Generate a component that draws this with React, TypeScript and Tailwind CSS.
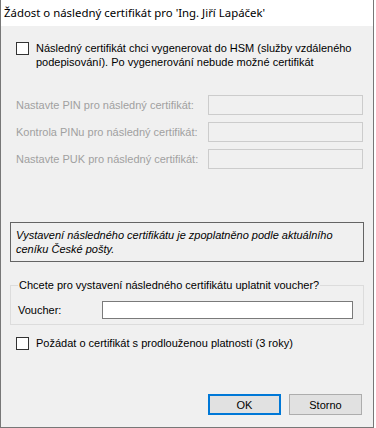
import React from "react";

const body = "font-['Liberation_Sans',Arial,sans-serif] text-[11px] leading-[14px]";

function CheckBox() {
  return <span className="mt-[1px] h-[13px] w-[13px] shrink-0 border border-[#333333] bg-white" />;
}

function PinRow({ label }: { label: string }) {
  return (
    <div className="flex items-center">
      <span className="ml-[6px] w-[192px] text-[#a0a0a0]">{label}</span>
      <span className="h-[20px] w-[155px] border border-[#cccccc] bg-[#f0f0f0]" />
    </div>
  );
}

export default function App() {
  return (
    <div className="h-[428px] w-[376px] bg-white">
      <div className="flex h-[428px] w-[374px] flex-col border border-t-0 border-[#777777]">
        {/* Title bar */}
        <div className="flex h-[26px] shrink-0 items-center bg-white pl-[3px] font-['Noto_Sans','Open_Sans',sans-serif] text-[11.4px] text-black">
          Žádost o následný certifikát pro 'Ing. Jiří Lapáček'
        </div>

        {/* Body */}
        <div className={`flex flex-1 flex-col bg-[#f0f0f0] px-[9px] text-black ${body}`}>
          <div className="ml-[6px] mt-[15px] flex gap-[7px]">
            <CheckBox />
            <span>
              Následný certifikát chci vygenerovat do HSM (služby vzdáleného
              <br />
              podepisování). Po vygenerování nebude možné certifikát
            </span>
          </div>

          <div className="mt-[26px] flex flex-col gap-[7px]">
            <PinRow label="Nastavte PIN pro následný certifikát:" />
            <PinRow label="Kontrola PINu pro následný certifikát:" />
            <PinRow label="Nastavte PUK pro následný certifikát:" />
          </div>

          <div className="mt-[53px] h-[40px] border border-[#646464] pl-[5px] pt-[5px] italic">
            Vystavení následného certifikátu je zpoplatněno podle aktuálního
            <br />
            ceníku České pošty.
          </div>

          <fieldset className="mt-[16px] border border-[#dcdcdc] pb-[5px]">
            <legend className="ml-[7px] px-[1px]">
              Chcete pro vystavení následného certifikátu uplatnit voucher?
            </legend>
            <div className="mt-[9px] flex items-center">
              <span className="ml-[7px] w-[84px]">Voucher:</span>
              <span className="h-[18px] w-[251px] border border-[#7a7a7a] bg-white" />
            </div>
          </fieldset>

          <div className="ml-[6px] mt-[11px] flex items-center gap-[7px]">
            <CheckBox />
            <span>Požádat o certifikát s prodlouženou platností (3 roky)</span>
          </div>

          <div className="mr-[2px] mt-[44px] flex justify-end gap-[8px]">
            <button className="h-[21px] w-[73px] border-2 border-[#0078d7] bg-[#e1e1e1]">OK</button>
            <button className="h-[21px] w-[73px] border border-[#adadad] bg-[#e1e1e1]">Storno</button>
          </div>
        </div>
      </div>
    </div>
  );
}
